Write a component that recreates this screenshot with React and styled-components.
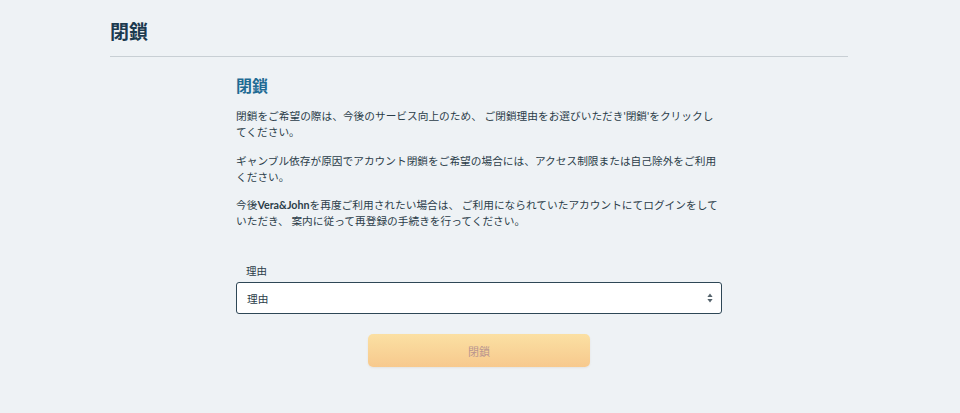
import React, { useState } from 'react';
import styled, { createGlobalStyle } from 'styled-components';

const GlobalStyle = createGlobalStyle`
  html, body {
    margin: 0;
    padding: 0;
    background: #eef2f5;
  }
  body {
    font-family: Lato, "Noto Sans CJK JP", "Noto Sans", sans-serif;
    color: #2b3d49;
  }
`;

const Page = styled.div`
  width: 738px;
  margin: 0 0 0 110px;
  min-height: 413px;
`;

const Header = styled.header`
  padding: 20px 0 13px;
  border-bottom: 1px solid #c8cfd4;
`;

const PageTitle = styled.h1`
  margin: 0;
  font-size: 19px;
  line-height: 23px;
  font-weight: 700;
  color: #1c3a4f;
`;

const Section = styled.section`
  width: 486px;
  margin: 0 auto;
  padding-top: 19px;
`;

const SectionTitle = styled.h2`
  margin: 0 0 12px;
  font-size: 16px;
  line-height: 20px;
  font-weight: 700;
  color: #1f6b94;
`;

const Text = styled.p`
  margin: 0 0 12.5px;
  font-size: 10.7px;
  line-height: 16px;
  color: #2b3d49;
`;

const Brand = styled.strong`
  font-weight: 700;
`;

const Field = styled.div`
  margin-top: 35px;
`;

const Label = styled.label`
  display: block;
  padding-left: 10px;
  margin-bottom: 4px;
  font-size: 10.5px;
  line-height: 14px;
  color: #2b3d49;
`;

const SelectWrap = styled.div`
  position: relative;
`;

const Select = styled.select`
  appearance: none;
  width: 100%;
  height: 32px;
  box-sizing: border-box;
  padding: 0 24px 0 10px;
  border: 1px solid #2e4756;
  border-radius: 3px;
  background: #fff;
  font-family: inherit;
  font-size: 10.7px;
  color: #2b3d49;
  outline: none;
`;

const Arrows = styled.svg`
  position: absolute;
  right: 9px;
  top: 50%;
  transform: translateY(-50%);
  pointer-events: none;
`;

const Actions = styled.div`
  display: flex;
  justify-content: center;
  padding-top: 20px;
`;

const SubmitButton = styled.button`
  width: 222px;
  height: 33px;
  border: none;
  border-radius: 5px;
  background: linear-gradient(180deg, #fbe0a3 0%, #f7c98d 100%);
  box-shadow: 0 1px 2px rgba(180, 150, 110, 0.15);
  font-family: inherit;
  font-size: 11px;
  color: #b8958f;
  cursor: ${p => (p.disabled ? 'default' : 'pointer')};
`;

export default function App() {
  const [reason, setReason] = useState('');

  return (
    <>
      <GlobalStyle />
      <Page>
        <Header>
          <PageTitle>閉鎖</PageTitle>
        </Header>
        <Section>
          <SectionTitle>閉鎖</SectionTitle>
          <Text>
            閉鎖をご希望の際は、今後のサービス向上のため、 ご閉鎖理由をお選びいただき'閉鎖'をクリックしてください。
          </Text>
          <Text>
            ギャンブル依存が原因でアカウント閉鎖をご希望の場合には、アクセス制限または自己除外をご利用ください。
          </Text>
          <Text>
            今後<Brand>Vera&amp;John</Brand>を再度ご利用されたい場合は、 ご利用になられていたアカウントにてログインをしていただき、 案内に従って再登録の手続きを行ってください。
          </Text>
          <Field>
            <Label htmlFor="reason">理由</Label>
            <SelectWrap>
              <Select id="reason" value={reason} onChange={e => setReason(e.target.value)}>
                <option value="">理由</option>
                <option value="1">その他</option>
              </Select>
              <Arrows width="6" height="10" viewBox="0 0 6 10">
                <path d="M3 0.5 L5.6 4 H0.4 Z" fill="#55636c" />
                <path d="M3 9.5 L5.6 6 H0.4 Z" fill="#55636c" />
              </Arrows>
            </SelectWrap>
          </Field>
          <Actions>
            <SubmitButton disabled={!reason}>閉鎖</SubmitButton>
          </Actions>
        </Section>
      </Page>
    </>
  );
}
